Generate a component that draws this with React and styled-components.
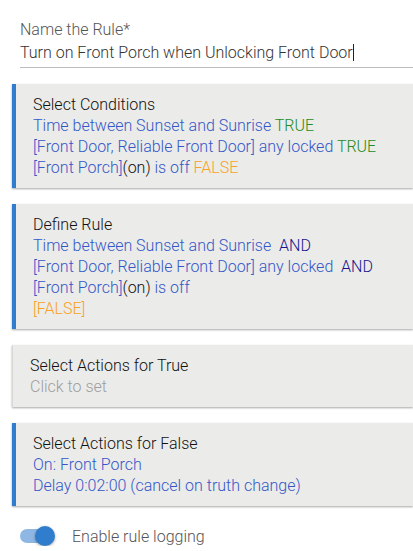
import React from 'react'
import styled, { createGlobalStyle } from 'styled-components'

const Global = createGlobalStyle`
  html, body {
    margin: 0;
    padding: 0;
    background: #ffffff;
  }
  body {
    font-family: Roboto, "Liberation Sans", Arial, sans-serif;
    font-weight: 300;
    font-size: 16px;
  }
`

const Page = styled.div`
  width: 413px;
  padding: 20px 0 0 12px;
  box-sizing: border-box;
  display: flex;
  flex-direction: column;
`

const Field = styled.div`
  padding-left: 8px;
  display: flex;
  flex-direction: column;
`

const Label = styled.div`
  color: #555555;
  font-size: 16px;
  line-height: 20px;
`

const Value = styled.div`
  color: #333333;
  font-size: 16px;
  line-height: 20px;
  padding: 3px 0 4px;
  border-bottom: 1px solid #bdbdbd;
`

const Caret = styled.span`
  display: inline-block;
  width: 1px;
  height: 17px;
  background: #222;
  vertical-align: -3px;
`

const Card = styled.div`
  margin-top: 16px;
  background: #ebebe9;
  border-left: ${p => (p.$active ? '4px solid #2f7dcc' : '1px solid #d8d8d6')};
  box-shadow: 0 1px 2px rgba(0, 0, 0, 0.35);
  padding: 10px 12px 10px 17px;
  line-height: 21px;
  font-size: 16px;
`

const Title = styled.div`
  color: #111111;
`

const Line = styled.div`
  color: ${p => p.$color || '#3457c8'};
  white-space: nowrap;
`

const Tag = styled.span`
  color: ${p => p.$color};
`

const ToggleRow = styled.div`
  display: flex;
  align-items: center;
  gap: 18px;
  margin-top: 20px;
  padding-left: 8px;
  height: 20px;
`

const Track = styled.div`
  position: relative;
  width: 34px;
  height: 14px;
  border-radius: 7px;
  background: #8fb7e4;
`

const Knob = styled.div`
  position: absolute;
  left: 15px;
  top: -3px;
  width: 20px;
  height: 20px;
  border-radius: 50%;
  background: #2f7dcc;
  box-shadow: 0 1px 3px rgba(0, 0, 0, 0.35);
`

const ToggleLabel = styled.span`
  color: #555555;
  font-size: 16px;
`

const Toggle = () => (
  <Track>
    <Knob />
  </Track>
)

const GREEN = '#228b22'
const ORANGE = '#f9a21f'
const NAVY = '#14148c'
const BLACK = '#111111'

export default function App() {
  return (
    <>
      <Global />
      <Page>
        <Field>
          <Label>Name the Rule*</Label>
          <Value>
            Turn on Front Porch when Unlocking Front Door<Caret />
          </Value>
        </Field>

        <Card $active>
          <Title>Select Conditions</Title>
          <Line>
            Time between Sunset and Sunrise <Tag $color={GREEN}>TRUE</Tag>
          </Line>
          <Line>
            [Front Door, Reliable Front Door] any locked <Tag $color={GREEN}>TRUE</Tag>
          </Line>
          <Line>
            [Front Porch]<Tag $color={BLACK}>(on)</Tag> is off <Tag $color={ORANGE}>FALSE</Tag>
          </Line>
        </Card>

        <Card $active>
          <Title>Define Rule</Title>
          <Line>
            Time between Sunset and Sunrise&nbsp; <Tag $color={NAVY}>AND</Tag>
          </Line>
          <Line>
            [Front Door, Reliable Front Door] any locked&nbsp; <Tag $color={NAVY}>AND</Tag>
          </Line>
          <Line>
            [Front Porch]<Tag $color={BLACK}>(on)</Tag> is off
          </Line>
          <Line $color={ORANGE}>[FALSE]</Line>
        </Card>

        <Card>
          <Title>Select Actions for True</Title>
          <Line $color="#9e9e9e">Click to set</Line>
        </Card>

        <Card $active>
          <Title>Select Actions for False</Title>
          <Line>On: Front Porch</Line>
          <Line>Delay 0:02:00 (cancel on truth change)</Line>
        </Card>

        <ToggleRow>
          <Toggle />
          <ToggleLabel>Enable rule logging</ToggleLabel>
        </ToggleRow>
      </Page>
    </>
  )
}
